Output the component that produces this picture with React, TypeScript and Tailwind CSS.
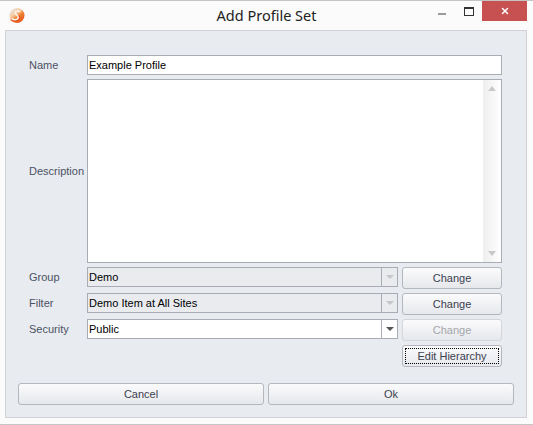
import React from 'react';
import { X } from 'lucide-react';

const font = "font-['Liberation_Sans','Noto_Sans',sans-serif]";

const Logo = () => (
  <svg width="16" height="17" viewBox="0 0 16 17">
    <defs>
      <linearGradient id="ball" x1="0.1" y1="0.05" x2="0.8" y2="0.9">
        <stop offset="0" stopColor="#e9e9e9" />
        <stop offset="0.4" stopColor="#f6c9a0" />
        <stop offset="0.65" stopColor="#f08030" />
        <stop offset="1" stopColor="#e8581f" />
      </linearGradient>
    </defs>
    <circle cx="8" cy="8.5" r="7.5" fill="url(#ball)" />
    <path d="M11.5 4.5 C8 3.5 5.5 4.5 6.5 6.8 C7.5 8.5 10.5 8.8 9 11.5 C8 13 5 13 2.5 11.8" stroke="#fdf1e6" strokeWidth="1.7" fill="none" />
    <path d="M1.5 12.5 C4 15 7.5 14.5 9.5 13 C11 11.5 11 9.5 9.5 8.5" stroke="#dd4a1e" strokeWidth="1.2" fill="none" opacity="0.8" />
  </svg>
);

const FieldLabel = ({ children }: { children: React.ReactNode }) => (
  <div className="w-[58px] shrink-0 text-[11px] leading-[20px] text-[#4b5263]">{children}</div>
);

const DropBox = ({ value, disabled }: { value: string; disabled?: boolean }) => (
  <div className={`flex h-[20px] w-[311px] border border-[#a9acb4] ${disabled ? 'bg-[#e9ebef]' : 'bg-white'}`}>
    <div className="flex-1 pl-[1px] text-[11px] leading-[18px] text-black">{value}</div>
    <div className="flex w-[16px] items-center justify-center border-l border-[#a9acb4]">
      <div className={`h-0 w-0 border-x-[4px] border-t-[4px] border-x-transparent ${disabled ? 'border-t-[#c4c6ca]' : 'border-t-[#555555]'}`} />
    </div>
  </div>
);

const Btn = ({ label, disabled, className }: { label: string; disabled?: boolean; className: string }) => (
  <button
    className={`rounded-[3px] border bg-gradient-to-b from-[#fbfbfc] to-[#e6e8ec] text-[11px] ${disabled ? 'border-[#d4d6da] text-[#a5a7ab]' : 'border-[#b4b7bd] text-[#3c4150]'} ${className}`}
  >
    {label}
  </button>
);

export default function App() {
  return (
    <div className={`flex h-[425px] w-[533px] flex-col border-y border-[#c4c4c4] bg-[#fbfbfb] ${font}`}>
      {/* Title bar */}
      <div className="grid h-[29px] shrink-0 grid-cols-[1fr_auto_1fr] items-center">
        <div className="ml-[9px] mt-[-1px]">
          <Logo />
        </div>
        <div className="font-['Noto_Sans',sans-serif] text-[14.5px] text-[#222222]">Add Profile Set</div>
        <div className="flex h-[20px] items-start justify-end self-start">
          <div className="mr-[18px] mt-[12px] h-[2px] w-[8px] bg-[#9a9a9a]" />
          <div className="mr-[8px] mt-[6px] h-[9px] w-[10px] border border-t-[2px] border-[#333333]" />
          <div className="mr-[6px] flex h-[20px] w-[45px] items-center justify-center bg-[#c75050]">
            <X size={10} strokeWidth={3.5} color="#ffffff" />
          </div>
        </div>
      </div>

      {/* Panel */}
      <div className="mx-[5px] flex h-[388px] w-[522px] shrink-0 flex-col border border-[#cfd1d5] bg-[#e8ebf0] pl-[23px] pt-[24px]">
        <div className="flex h-[24px] items-start">
          <FieldLabel>Name</FieldLabel>
          <div className="h-[20px] w-[415px] border border-[#a9acb4] bg-white pl-[1px] text-[11px] leading-[18px] text-black">
            Example Profile
          </div>
        </div>

        <div className="flex h-[188px] items-start">
          <div className="flex h-[184px] w-[58px] shrink-0 items-center">
            <div className="text-[11px] text-[#4b5263]">Description</div>
          </div>
          <div className="flex h-[184px] w-[415px] justify-end border border-[#a9acb4] bg-white">
            <div className="flex w-[18px] flex-col items-center justify-between bg-gradient-to-r from-[#eeeeee] to-white py-[6px]">
              <div className="h-0 w-0 border-x-[4px] border-b-[5px] border-x-transparent border-b-[#c9c9c9]" />
              <div className="h-0 w-0 border-x-[4px] border-t-[5px] border-x-transparent border-t-[#c9c9c9]" />
            </div>
          </div>
        </div>

        <div className="flex h-[26px] items-start">
          <FieldLabel>Group</FieldLabel>
          <DropBox value="Demo" disabled />
          <Btn label="Change" className="ml-[4px] h-[22px] w-[100px]" />
        </div>
        <div className="flex h-[26px] items-start">
          <FieldLabel>Filter</FieldLabel>
          <DropBox value="Demo Item at All Sites" disabled />
          <Btn label="Change" className="ml-[4px] h-[22px] w-[100px]" />
        </div>
        <div className="flex h-[26px] items-start">
          <FieldLabel>Security</FieldLabel>
          <DropBox value="Public" />
          <Btn label="Change" disabled className="ml-[4px] h-[22px] w-[100px]" />
        </div>
        <div className="flex h-[38px] items-start justify-start pl-[373px]">
          <button className="h-[22px] w-[100px] rounded-[3px] border border-[#b4b7bd] bg-gradient-to-b from-[#fbfbfc] to-[#e6e8ec] p-[2px] text-[11px] text-[#3c4150]">
            <span className="block h-full border border-dotted border-black leading-[14px]">Edit Hierarchy</span>
          </button>
        </div>

        <div className="ml-[-11px] flex gap-[4px]">
          <Btn label="Cancel" className="h-[22px] w-[246px]" />
          <Btn label="Ok" className="h-[22px] w-[246px]" />
        </div>
      </div>
    </div>
  );
}
